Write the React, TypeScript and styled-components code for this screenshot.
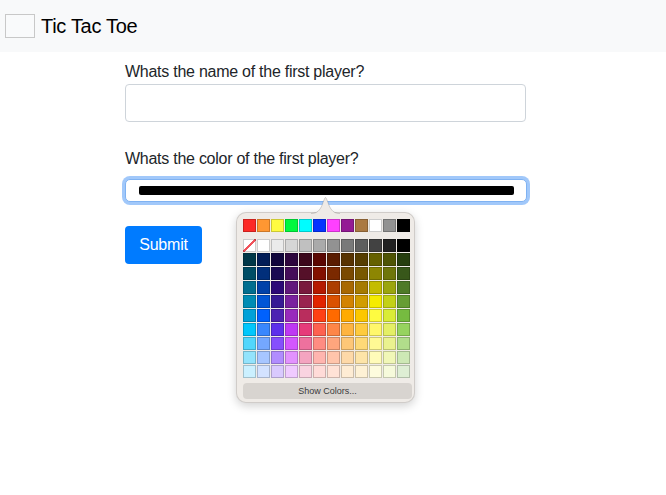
import React from "react";
import styled, { createGlobalStyle } from "styled-components";

const GlobalStyle = createGlobalStyle`
  html, body { margin: 0; padding: 0; background: #ffffff; }
  body {
    font-family: "Liberation Sans", Arial, sans-serif;
    color: #212529;
  }
  * { box-sizing: border-box; }
`;

const TOP_ROW = [
  "#fd2a26", "#ff9732", "#fffb40", "#00f93f", "#00fdff", "#0433ff",
  "#ff40ff", "#941a94", "#aa7942", "#ffffff", "#929292", "#000000",
];

const GRAY_ROW = [
  "none", "#ffffff", "#ebebeb", "#d6d6d6", "#c0c0c0", "#aaaaaa",
  "#929292", "#797979", "#5e5e5e", "#424242", "#212121", "#000000",
];

const COLOR_ROWS = [
  ["#003748", "#021d57", "#11053b", "#2e063d", "#3c071b", "#5c0701", "#5a1c00", "#583300", "#563d00", "#666100", "#4f5504", "#263e0f"],
  ["#004d65", "#012f7b", "#1a0a52", "#450d59", "#551029", "#831100", "#7b2900", "#7a4a00", "#785800", "#8d8602", "#6f760a", "#38571a"],
  ["#016e8f", "#0042a9", "#2c0977", "#61187c", "#791a3d", "#b51a00", "#ad3e00", "#a96800", "#a67b01", "#c4bc00", "#9ba50e", "#4e7a27"],
  ["#008cb4", "#0056d6", "#371a94", "#7a219e", "#99244f", "#e22400", "#da5100", "#d38301", "#d19d01", "#f5ec00", "#c3d117", "#669d34"],
  ["#00a1d8", "#0061fd", "#4d22b2", "#982abc", "#b92d5d", "#ff4015", "#ff6a00", "#ffab01", "#fcc700", "#fefb41", "#d9ec37", "#76bb40"],
  ["#01c7fc", "#3a87fd", "#5e30eb", "#be38f3", "#e63b7a", "#fe6250", "#fe8648", "#feb43f", "#fecb3e", "#fff76b", "#e4ef65", "#96d35f"],
  ["#52d6fc", "#74a7ff", "#864ffd", "#d357fe", "#ee719e", "#ff8c82", "#fea57d", "#fec777", "#fed977", "#fff994", "#eaf28f", "#b1dd8b"],
  ["#93e3fc", "#a7c6ff", "#b18cfe", "#e292fe", "#f4a4c0", "#ffb5af", "#ffc5ab", "#fed9a8", "#fde4a8", "#fffbb9", "#f1f7b7", "#cde8b5"],
  ["#cbf0ff", "#d3e2ff", "#d9c9fe", "#efcaff", "#f9d3e0", "#ffdbd8", "#ffe2d6", "#feecd4", "#fef1d5", "#fdfbdd", "#f6fadb", "#deeed4"],
];

const Page = styled.div`
  min-height: 495px;
  background: #ffffff;
`;

const Navbar = styled.nav`
  display: flex;
  align-items: center;
  gap: 6px;
  height: 52px;
  padding: 0 5px;
  background: #f8f9fa;
`;

const BrandBox = styled.span`
  display: block;
  width: 30px;
  height: 24px;
  border: 1px solid #c8c8c8;
  background: #f9fafb;
`;

const Brand = styled.span`
  font-size: 20px;
  line-height: 24px;
  letter-spacing: -0.3px;
  color: #000000;
`;

const Form = styled.form`
  width: 401px;
  margin-left: 125px;
  padding-top: 8px;
`;

const FormGroup = styled.div<{ $gap: number }>`
  display: flex;
  flex-direction: column;
  align-items: stretch;
  margin-top: ${(p) => p.$gap}px;
`;

const Label = styled.label<{ $space: number }>`
  font-size: 16px;
  line-height: 24px;
  letter-spacing: -0.26px;
  margin-bottom: ${(p) => p.$space}px;
  color: #212529;
`;

const TextInput = styled.input`
  height: 38px;
  width: 401px;
  border: 1px solid #ced4da;
  border-radius: 4px;
  background: #ffffff;
  padding: 6px 12px;
  font-size: 16px;
  font-family: inherit;
  outline: none;
`;

const ColorField = styled.div`
  position: relative;
  width: 402px;
  height: 23px;
`;

const ColorBox = styled.div`
  display: flex;
  align-items: center;
  height: 23px;
  padding: 0 12px 0 13px;
  border: 1px solid #7fb2f2;
  border-radius: 5px;
  background: #ffffff;
  box-shadow: 0 0 0 3px rgba(130, 182, 248, 0.75);
`;

const ColorBar = styled.div`
  flex: 1;
  height: 9px;
  background: #000000;
  border-radius: 2px;
`;

const Popover = styled.div`
  position: absolute;
  left: 111px;
  top: 33px;
  width: 179px;
  padding: 6px 6px 3px 6px;
  background: #efebe7;
  border: 1px solid rgba(0, 0, 0, 0.13);
  border-radius: 10px;
  box-shadow: 0 3px 10px rgba(0, 0, 0, 0.18);
  z-index: 2;
`;

const Arrow = styled.svg`
  position: absolute;
  left: 74px;
  top: -16px;
  width: 29px;
  height: 17px;
  display: block;
`;

const SwatchGrid = styled.div<{ $gapBelow: number }>`
  display: grid;
  grid-template-columns: repeat(12, 13px);
  grid-auto-rows: 13px;
  gap: 1px;
  margin-bottom: ${(p) => p.$gapBelow}px;
`;

const Swatch = styled.div<{ $c: string }>`
  background: ${(p) => p.$c};
  box-shadow: inset 0 0 0 1px rgba(0, 0, 0, 0.2);
`;

const NoneSwatch = styled.div`
  background:
    linear-gradient(
      to bottom right,
      transparent calc(50% - 0.8px),
      #f0525a calc(50% - 0.8px),
      #f0525a calc(50% + 0.8px),
      transparent calc(50% + 0.8px)
    ),
    #ffffff;
  box-shadow: inset 0 0 0 1px rgba(0, 0, 0, 0.2);
`;

const ShowColors = styled.button`
  display: block;
  width: 169px;
  height: 16px;
  margin: 0 auto;
  padding: 0;
  border: none;
  border-radius: 4px;
  background: #d8d4d0;
  color: #3b3b3b;
  font-family: "Liberation Sans", Arial, sans-serif;
  font-size: 9px;
  line-height: 16px;
  text-align: center;
`;

const SubmitButton = styled.button`
  display: block;
  margin-top: 24px;
  width: 77px;
  height: 38px;
  border: none;
  border-radius: 4px;
  background: #007bff;
  color: #ffffff;
  font-family: inherit;
  font-size: 16px;
  letter-spacing: -0.2px;
  padding: 0;
`;

export default function App() {
  return (
    <Page>
      <GlobalStyle />
      <Navbar>
        <BrandBox />
        <Brand>Tic Tac Toe</Brand>
      </Navbar>
      <Form onSubmit={(e) => e.preventDefault()}>
        <FormGroup $gap={0}>
          <Label $space={0}>Whats the name of the first player?</Label>
          <TextInput type="text" />
        </FormGroup>
        <FormGroup $gap={25}>
          <Label $space={8}>Whats the color of the first player?</Label>
          <ColorField>
            <ColorBox>
              <ColorBar />
            </ColorBox>
            <Popover>
              <Arrow viewBox="0 0 29 17">
                <path
                  d="M0 16.5 C6 16.5 9 13.5 11.5 7 C13 2.5 14 0.5 14.5 0.5 C15 0.5 16 2.5 17.5 7 C20 13.5 23 16.5 29 16.5 L29 17 L0 17 Z"
                  fill="#efebe7"
                />
                <path
                  d="M0 16.5 C6 16.5 9 13.5 11.5 7 C13 2.5 14 0.5 14.5 0.5 C15 0.5 16 2.5 17.5 7 C20 13.5 23 16.5 29 16.5"
                  fill="none"
                  stroke="rgba(0,0,0,0.16)"
                  strokeWidth="1"
                />
              </Arrow>
              <SwatchGrid $gapBelow={7}>
                {TOP_ROW.map((c, i) => (
                  <Swatch key={i} $c={c} />
                ))}
              </SwatchGrid>
              <SwatchGrid $gapBelow={5}>
                {GRAY_ROW.map((c, i) =>
                  c === "none" ? <NoneSwatch key={`g${i}`} /> : <Swatch key={`g${i}`} $c={c} />
                )}
                {COLOR_ROWS.flatMap((row, r) =>
                  row.map((c, i) => <Swatch key={`${r}-${i}`} $c={c} />)
                )}
              </SwatchGrid>
              <ShowColors type="button">Show Colors...</ShowColors>
            </Popover>
          </ColorField>
        </FormGroup>
        <SubmitButton type="submit">Submit</SubmitButton>
      </Form>
    </Page>
  );
}
